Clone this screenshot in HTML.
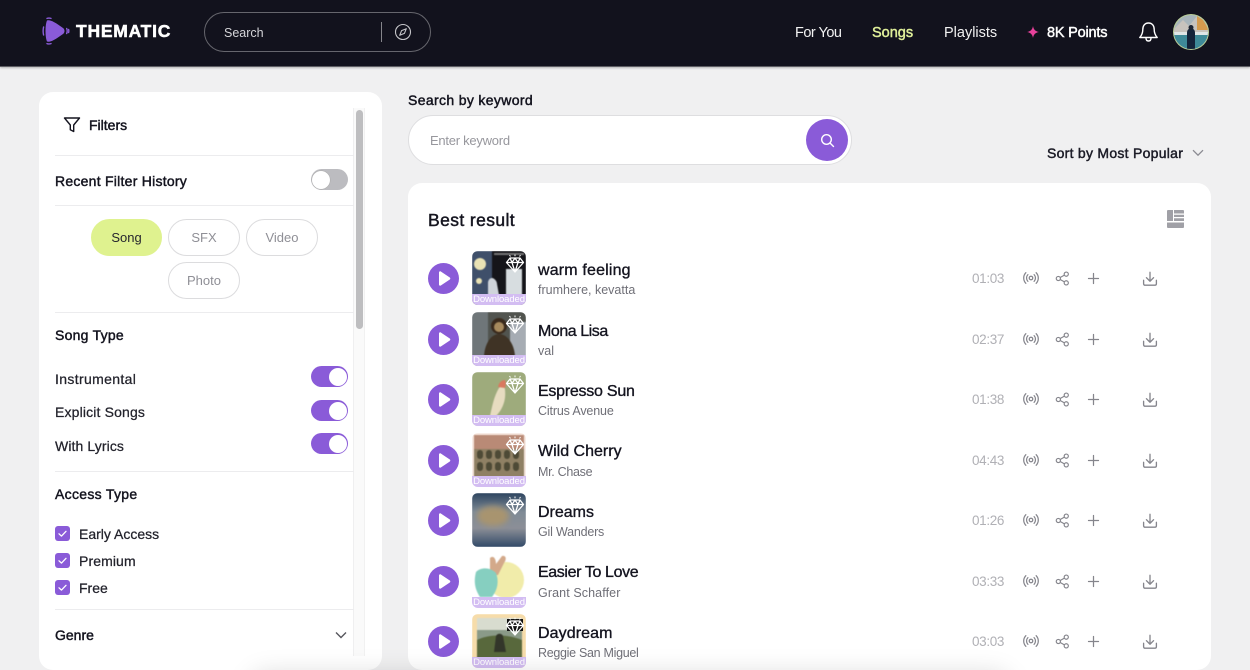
<!DOCTYPE html>
<html><head><meta charset="utf-8"><style>
*{box-sizing:border-box;margin:0;padding:0}
html,body{width:1250px;height:670px;overflow:hidden;background:#f0f0f1;font-family:"Liberation Sans",sans-serif;color:#14141f}
#w{position:relative;width:1250px;height:670px;overflow:hidden}
.a{position:absolute;white-space:nowrap}
.m{-webkit-text-stroke:.25px currentColor}
.s{-webkit-text-stroke:.45px currentColor}
.hr{position:absolute;left:55px;width:299px;height:1px;background:#ececee}
.t{position:absolute;left:311px;width:37px;height:21px;border-radius:11px;background:#8a5bd8}
.t i{position:absolute;right:1px;top:1.5px;width:18px;height:18px;border-radius:50%;background:#fff}
.p{position:absolute;height:37px;border:1px solid #dcdcde;border-radius:19px;color:#8f8f96;font-size:13px;text-align:center;line-height:35px;background:#fff}
.c{position:absolute;left:55px;width:15px;height:15px;border-radius:3px;background:#8a5bd8}
.row{position:absolute;left:0;width:1250px;height:54px}
.pl{position:absolute;left:428px;top:12px;width:31px;height:31px;border-radius:50%;background:#8a5bd8}
.th{position:absolute;left:472px;top:0;width:54px;height:54px;border-radius:6px;overflow:hidden}
.th svg{display:block;filter:blur(.4px)}
.dl{position:absolute;left:0;bottom:0;width:54px;height:11.5px;background:#d3bdf2;color:#fff;font-size:9.5px;line-height:12px;text-align:center;letter-spacing:-.1px}
.ti{position:absolute;left:538px;top:10px;font-size:16px;color:#14141f;white-space:nowrap;-webkit-text-stroke:.35px currentColor}
.ar{position:absolute;left:538px;top:32px;font-size:12.5px;color:#6f6f77;white-space:nowrap}
.d{position:absolute;left:972px;top:20px;font-size:13.5px;color:#b0b0b5;white-space:nowrap;letter-spacing:-.35px}
.i1,.i2,.i3,.i4{position:absolute}
.i1{left:1023px;top:19px}
.i2{left:1055px;top:20px}
.i3{left:1086px;top:20px}
.i4{left:1142px;top:20px}
</style></head><body><div id="w">
<svg width="0" height="0" style="position:absolute"><defs>
<symbol id="pl" viewBox="0 0 31 31"><path d="M11 9.500c0-1 1-1.500 1.800-1l9 6c.7.500.7 1.500 0 2l-9 6c-.8.500-1.800 0-1.800-1z" fill="#fff"/></symbol>
<symbol id="gem" viewBox="0 0 20 20"><path d="M5 4h10l3.500 4.500L10 18 1.500 8.500zM1.500 8.500h17M7 8.500 10 18l3-9.500M5 4l2 4.500L10 4l3 4.500L15 4" fill="none" stroke="#fff" stroke-width="1.300" stroke-linejoin="round"/><path d="M10 .5v1.800M4.500 1l1 1.500M15.500 1l-1 1.500" stroke="#fff" stroke-width="1"/></symbol>
<symbol id="ra" viewBox="0 0 18 18"><circle cx="9" cy="9" r="2" fill="none" stroke="#85858c" stroke-width="1.400"/><path d="M5.500 5.200a5.500 5.500 0 0 0 0 7.600M12.500 5.200a5.500 5.500 0 0 1 0 7.600M3.200 3a8.700 8.700 0 0 0 0 12M14.800 3a8.700 8.700 0 0 1 0 12" fill="none" stroke="#85858c" stroke-width="1.400" stroke-linecap="round"/></symbol>
<symbol id="sh" viewBox="0 0 18 18"><circle cx="13.500" cy="3.800" r="2.500" fill="none" stroke="#85858c" stroke-width="1.400"/><circle cx="13.500" cy="14.200" r="2.500" fill="none" stroke="#85858c" stroke-width="1.400"/><circle cx="4" cy="9" r="2.500" fill="none" stroke="#85858c" stroke-width="1.400"/><path d="M6.200 7.800 11.300 5M6.200 10.200l5.100 2.800" stroke="#85858c" stroke-width="1.400"/></symbol>
<symbol id="pu" viewBox="0 0 18 18"><path d="M9 3v12M3 9h12" stroke="#85858c" stroke-width="1.500" stroke-linecap="round"/></symbol>
<symbol id="do" viewBox="0 0 18 18"><path d="M9 1.500v9.500M5 7.500l4 4 4-4M1.800 10.500v3.700c0 1 .7 1.800 1.700 1.800h11c1 0 1.700-.8 1.700-1.800v-3.700" fill="none" stroke="#85858c" stroke-width="1.500" stroke-linecap="round" stroke-linejoin="round"/></symbol>
<symbol id="ck" viewBox="0 0 15 15"><path d="M4 7.800l2.500 2.300L11 5.300" fill="none" stroke="#fff" stroke-width="1.300" stroke-linecap="round" stroke-linejoin="round"/></symbol>
</defs></svg>

<!-- header -->
<div class="a" style="left:0;top:0;width:1250px;height:67px;background:#12121d;border-bottom:1px solid #5d5d63;box-shadow:0 1px 2px rgba(0,0,0,.25)"></div>
<svg class="a" style="left:42px;top:17px" width="28" height="28" viewBox="0 0 28 28"><path d="M5 3.500C8 2.500 12 4.500 21 11c2 1.700 2 4.300 0 6C12 23.500 8 25.500 5 24.500 3 20 3 8 5 3.500z" fill="#8a5bd8"/><path d="M1.600 10c-.6 2.500-.6 5.500 0 8M5 1.400c1.300-.5 2.600-.5 4 0M5 26.600c1.300.5 2.600.5 4 0M24.700 11.500c.6 1.500.6 3.500 0 5M26.600 12.500c.3 1 .3 2 0 3" fill="none" stroke="#8a5bd8" stroke-width="1.400" stroke-linecap="round"/></svg>
<div class="a" style="left:76px;top:21px;font-size:17.500px;font-weight:bold;color:#fff;letter-spacing:.75px;-webkit-text-stroke:.5px #fff">THEMATIC</div>
<div class="a" style="left:204px;top:12px;width:227px;height:40px;border:1px solid #66666d;border-radius:20px"></div>
<div class="a" style="left:224px;top:26px;font-size:12.500px;color:#d5d5d9">Search</div>
<div class="a" style="left:381px;top:22px;width:1px;height:20px;background:#85858b"></div>
<svg class="a" style="left:394px;top:23px" width="18" height="18" viewBox="0 0 18 18"><circle cx="9" cy="9" r="7.500" fill="none" stroke="#c4c4c8" stroke-width="1.100"/><path d="M12.300 5.700 10.400 10.400 5.700 12.300 7.600 7.600z" fill="none" stroke="#c4c4c8" stroke-width="1.100" stroke-linejoin="round"/></svg>
<div class="a" style="left:795px;top:25px;font-size:14.500px;color:#f2f2f2;letter-spacing:-.5px">For You</div>
<div class="a s" style="left:872px;top:25px;font-size:14.500px;color:#e0f09a">Songs</div>
<div class="a" style="left:944px;top:25px;font-size:14.500px;color:#f2f2f2">Playlists</div>
<svg class="a" style="left:1026px;top:25px" width="14" height="14" viewBox="0 0 14 14"><path d="M7 1c.6 3.600 2.300 5.300 6 6-3.700.7-5.400 2.400-6 6-.6-3.600-2.300-5.300-6-6 3.700-.7 5.400-2.400 6-6z" fill="#e8429c"/></svg>
<div class="a s" style="left:1047px;top:25px;font-size:14.500px;color:#fff;letter-spacing:-.2px">8K Points</div>
<svg class="a" style="left:1138px;top:21px" width="21" height="22" viewBox="0 0 21 22"><path d="M10.500 2C6.800 2 4.800 4.800 4.800 8.500c0 4-1.300 6-3 8h17.400c-1.700-2-3-4-3-8C16.200 4.800 14.200 2 10.500 2zM8 17c0 2 1 3 2.500 3s2.500-1 2.500-3" fill="none" stroke="#fff" stroke-width="1.400" stroke-linejoin="round"/></svg>
<svg class="a" style="left:1173px;top:14px" width="36" height="36" viewBox="0 0 36 36"><defs><clipPath id="av"><circle cx="18" cy="18" r="17"/></clipPath></defs><circle cx="18" cy="18" r="18" fill="#b9cf97"/><g clip-path="url(#av)"><rect width="36" height="36" fill="#a8b5bb"/><path d="M0 16 10 6l6 6 8-10 12 12v4H0z" fill="#c7c3bd"/><path d="M24 2l6 4 6 10H24z" fill="#d59b4e"/><rect y="18" width="36" height="18" fill="#3e8a98"/><path d="M0 18h36v3H0z" fill="#dfe6e6"/><path d="M14 36V19c0-3 1.500-4.500 4-4.500s4 1.500 4 4.500v17z" fill="#14243a"/><circle cx="18" cy="13.500" r="2.500" fill="#1c2433"/></g></svg>

<!-- sidebar -->
<div class="a" style="left:39px;top:92px;width:343px;height:578px;background:#fff;border-radius:14px"></div>
<div class="a" style="left:353px;top:108px;width:12px;height:548px;background:#fafafa;border-left:1px solid #efeff0;border-right:1px solid #f1f1f1"></div>
<div class="a" style="left:356px;top:110px;width:7px;height:219px;background:#bebec0;border-radius:4px"></div>
<svg class="a" style="left:63px;top:116px" width="18" height="18" viewBox="0 0 18 18"><path d="M1.500 2h15l-5.800 7v6.500l-3.400-1.800V9z" fill="none" stroke="#14141f" stroke-width="1.400" stroke-linejoin="round"/></svg>
<div class="a s" style="left:89px;top:117px;font-size:14px">Filters</div>
<div class="hr" style="top:155px"></div>
<div class="a s" style="left:55px;top:173px;font-size:14px;letter-spacing:.25px">Recent Filter History</div>
<div class="t" style="top:169px;background:#bcbcc0"><i style="right:auto;left:1px;box-shadow:0 0 0 .5px #aaa"></i></div>
<div class="hr" style="top:205px"></div>
<div class="p" style="left:91px;top:219px;width:71px;background:#dff28f;border-color:#dff28f;color:#26262e">Song</div>
<div class="p" style="left:168px;top:219px;width:72px">SFX</div>
<div class="p" style="left:246px;top:219px;width:72px">Video</div>
<div class="p" style="left:168px;top:262px;width:72px">Photo</div>
<div class="hr" style="top:312px"></div>
<div class="a s" style="left:55px;top:327px;font-size:14px;letter-spacing:.25px">Song Type</div>
<div class="a m" style="left:55px;top:371px;font-size:14px;color:#22222b;letter-spacing:.35px">Instrumental</div>
<div class="t" style="top:366px"><i></i></div>
<div class="a m" style="left:55px;top:404px;font-size:14px;color:#22222b;letter-spacing:.15px">Explicit Songs</div>
<div class="t" style="top:400px"><i></i></div>
<div class="a m" style="left:55px;top:438px;font-size:14px;color:#22222b;letter-spacing:.1px">With Lyrics</div>
<div class="t" style="top:433px"><i></i></div>
<div class="hr" style="top:471px"></div>
<div class="a s" style="left:55px;top:486px;font-size:14px;letter-spacing:.3px">Access Type</div>
<div class="c" style="top:526px"><svg width="15" height="15"><use href="#ck"/></svg></div>
<div class="a m" style="left:79px;top:526px;font-size:14px;color:#22222b">Early Access</div>
<div class="c" style="top:553px"><svg width="15" height="15"><use href="#ck"/></svg></div>
<div class="a m" style="left:79px;top:553px;font-size:14px;color:#22222b;letter-spacing:.1px">Premium</div>
<div class="c" style="top:580px"><svg width="15" height="15"><use href="#ck"/></svg></div>
<div class="a m" style="left:79px;top:580px;font-size:14px;color:#22222b">Free</div>
<div class="hr" style="top:609px"></div>
<div class="a s" style="left:55px;top:627px;font-size:14px">Genre</div>
<svg class="a" style="left:335px;top:631px" width="12" height="8" viewBox="0 0 12 8"><path d="M1 1.500l5 5 5-5" fill="none" stroke="#55555c" stroke-width="1.400"/></svg>

<!-- search -->
<div class="a s" style="left:408px;top:92px;font-size:14px;letter-spacing:.35px">Search by keyword</div>
<div class="a" style="left:408px;top:115px;width:444px;height:50px;background:#fff;border:1px solid #dedee0;border-radius:25px"></div>
<div class="a" style="left:430px;top:133px;font-size:13px;color:#97979d;letter-spacing:-.25px">Enter keyword</div>
<div class="a" style="left:806px;top:119px;width:42px;height:42px;border-radius:50%;background:#8a5bd8"></div>
<svg class="a" style="left:820px;top:133px" width="15" height="15" viewBox="0 0 15 15"><circle cx="6.500" cy="6.500" r="4.800" fill="none" stroke="#fff" stroke-width="1.400"/><path d="M10 10l3.500 3.500" stroke="#fff" stroke-width="1.400" stroke-linecap="round"/></svg>
<div class="a s" style="left:1047px;top:145px;font-size:14px;color:#1b1b26;letter-spacing:.27px">Sort by Most Popular</div>
<svg class="a" style="left:1192px;top:149px" width="12" height="8" viewBox="0 0 12 8"><path d="M1 1.200l5 5 5-5" fill="none" stroke="#8b8b92" stroke-width="1.300"/></svg>

<!-- results panel -->
<div class="a" style="left:408px;top:183px;width:803px;height:487px;background:#fff;border-radius:14px"></div>
<div class="a s" style="left:428px;top:210px;font-size:17.500px;color:#14141f;letter-spacing:.4px">Best result</div>
<svg class="a" style="left:1167px;top:210px" width="17" height="18" viewBox="0 0 17 18"><path d="M0 1a1 1 0 0 1 1-1h5v11H0zM7 0h9a1 1 0 0 1 1 1v2.500H7zM7 4.700h10V7H7zM7 8.200h10V11H7zM0 12.500h17V17a1 1 0 0 1-1 1H1a1 1 0 0 1-1-1z" fill="#a0a0a6"/></svg>

<!-- row 1 -->
<div class="row" style="top:251px">
<div class="pl"><svg width="31" height="31"><use href="#pl"/></svg></div>
<div class="th"><svg width="54" height="54"><rect width="54" height="54" fill="#15151a"/><rect x="0" y="0" width="20" height="44" fill="#3f4f6a"/><circle cx="8" cy="13" r="6" fill="#e9e2b4"/><circle cx="7" cy="30" r="3" fill="#e9e2b4"/><path d="M16 44V32c0-3 2-5 4-5s5 3 5 6l2 11z" fill="#cfd4da"/><rect x="34" y="18" width="16" height="26" fill="#d7dde0"/><rect x="22" y="2" width="30" height="2" fill="#777"/></svg><div class="dl">Downloaded</div></div>
<svg width="20" height="20" style="position:absolute;left:505px;top:3px"><use href="#gem"/></svg>
<div class="ti" style="letter-spacing:.17px;top:11px">warm feeling</div><div class="ar">frumhere, kevatta</div><div class="d">01:03</div>
<svg class="i1" width="16" height="16"><use href="#ra"/></svg><svg class="i2" width="15" height="15"><use href="#sh"/></svg><svg class="i3" width="15" height="15"><use href="#pu"/></svg><svg class="i4" width="16" height="16"><use href="#do"/></svg>
</div>
<!-- row 2 -->
<div class="row" style="top:312px">
<div class="pl"><svg width="31" height="31"><use href="#pl"/></svg></div>
<div class="th"><svg width="54" height="54"><rect width="54" height="54" fill="#51544f"/><path d="M0 0h16v44H0z" fill="#6f7679"/><path d="M38 10h16v34H38z" fill="#a6acb3"/><circle cx="27" cy="14" r="8" fill="#3a2a1c"/><path d="M12 44c1-14 8-22 15-22s15 8 16 22z" fill="#3f3325"/><circle cx="27" cy="15" r="5" fill="#a78a5d"/></svg><div class="dl">Downloaded</div></div>
<svg width="20" height="20" style="position:absolute;left:505px;top:3px"><use href="#gem"/></svg>
<div class="ti" style="letter-spacing:-.45px;top:11px">Mona Lisa</div><div class="ar">val</div><div class="d">02:37</div>
<svg class="i1" width="16" height="16"><use href="#ra"/></svg><svg class="i2" width="15" height="15"><use href="#sh"/></svg><svg class="i3" width="15" height="15"><use href="#pu"/></svg><svg class="i4" width="16" height="16"><use href="#do"/></svg>
</div>
<!-- row 3 -->
<div class="row" style="top:372px">
<div class="pl"><svg width="31" height="31"><use href="#pl"/></svg></div>
<div class="th"><svg width="54" height="54"><rect width="54" height="54" fill="#9eab7c"/><path d="M18 44c2-9 4-20 9-28 3-3 6-2 6 2 1 8-1 18-9 26z" fill="#e7dcc0"/><path d="M26 15c1-5 4-7 7-7 1 2 1 5 0 8z" fill="#d9795f"/></svg><div class="dl">Downloaded</div></div>
<svg width="20" height="20" style="position:absolute;left:505px;top:3px"><use href="#gem"/></svg>
<div class="ti" style="letter-spacing:-.25px;top:11px">Espresso Sun</div><div class="ar" style="letter-spacing:-.15px">Citrus Avenue</div><div class="d">01:38</div>
<svg class="i1" width="16" height="16"><use href="#ra"/></svg><svg class="i2" width="15" height="15"><use href="#sh"/></svg><svg class="i3" width="15" height="15"><use href="#pu"/></svg><svg class="i4" width="16" height="16"><use href="#do"/></svg>
</div>
<!-- row 4 -->
<div class="row" style="top:433px">
<div class="pl"><svg width="31" height="31"><use href="#pl"/></svg></div>
<div class="th"><svg width="54" height="54"><rect width="54" height="54" fill="#f7e7df"/><rect x="2" y="2" width="50" height="14" fill="#b98a76"/><rect x="2" y="16" width="50" height="30" fill="#8f8064"/><g fill="#4e4a36"><rect x="5" y="17" width="6" height="9" rx="3"/><rect x="14" y="17" width="6" height="9" rx="3"/><rect x="23" y="17" width="6" height="9" rx="3"/><rect x="32" y="17" width="6" height="9" rx="3"/><rect x="41" y="17" width="6" height="9" rx="3"/><rect x="5" y="29" width="6" height="9" rx="3"/><rect x="14" y="29" width="6" height="9" rx="3"/><rect x="23" y="29" width="6" height="9" rx="3"/><rect x="32" y="29" width="6" height="9" rx="3"/><rect x="41" y="29" width="6" height="9" rx="3"/></g></svg><div class="dl">Downloaded</div></div>
<svg width="20" height="20" style="position:absolute;left:505px;top:3px"><use href="#gem"/></svg>
<div class="ti">Wild Cherry</div><div class="ar" style="letter-spacing:-.3px">Mr. Chase</div><div class="d">04:43</div>
<svg class="i1" width="16" height="16"><use href="#ra"/></svg><svg class="i2" width="15" height="15"><use href="#sh"/></svg><svg class="i3" width="15" height="15"><use href="#pu"/></svg><svg class="i4" width="16" height="16"><use href="#do"/></svg>
</div>
<!-- row 5 -->
<div class="row" style="top:493px">
<div class="pl"><svg width="31" height="31"><use href="#pl"/></svg></div>
<div class="th"><svg width="54" height="54"><defs><linearGradient id="dr" x1="0" y1="0" x2="0" y2="1"><stop offset="0" stop-color="#2e4560"/><stop offset=".35" stop-color="#7f8b96"/><stop offset=".65" stop-color="#8c8f97"/><stop offset="1" stop-color="#324a68"/></linearGradient></defs><rect width="54" height="54" fill="url(#dr)"/><ellipse cx="21" cy="23" rx="16" ry="10" fill="#a8946f" style="filter:blur(3px)"/></svg></div>
<svg width="20" height="20" style="position:absolute;left:505px;top:3px"><use href="#gem"/></svg>
<div class="ti" style="top:11px">Dreams</div><div class="ar" style="letter-spacing:-.2px">Gil Wanders</div><div class="d">01:26</div>
<svg class="i1" width="16" height="16"><use href="#ra"/></svg><svg class="i2" width="15" height="15"><use href="#sh"/></svg><svg class="i3" width="15" height="15"><use href="#pu"/></svg><svg class="i4" width="16" height="16"><use href="#do"/></svg>
</div>
<!-- row 6 -->
<div class="row" style="top:554px">
<div class="pl"><svg width="31" height="31"><use href="#pl"/></svg></div>
<div class="th"><svg width="54" height="54"><rect width="54" height="54" fill="#fff"/><circle cx="34" cy="26" r="18" fill="#f1ecaa"/><path d="M18 4c3-3 6 0 6 6l6-8c4-1 5 3 2 7l-6 12H18z" fill="#d3a98a"/><path d="M4 18c5-5 14-5 20 1 3 8 2 16-4 24H8C2 34 2 26 4 18z" fill="#86cfc0"/></svg><div class="dl">Downloaded</div></div>
<div class="ti" style="letter-spacing:-.38px">Easier To Love</div><div class="ar" style="letter-spacing:.1px">Grant Schaffer</div><div class="d">03:33</div>
<svg class="i1" width="16" height="16"><use href="#ra"/></svg><svg class="i2" width="15" height="15"><use href="#sh"/></svg><svg class="i3" width="15" height="15"><use href="#pu"/></svg><svg class="i4" width="16" height="16"><use href="#do"/></svg>
</div>
<!-- row 7 -->
<div class="row" style="top:614px">
<div class="pl"><svg width="31" height="31"><use href="#pl"/></svg></div>
<div class="th"><svg width="54" height="54"><rect width="54" height="54" fill="#f6dcaa"/><rect x="5" y="4" width="45" height="40" fill="#8a9a88"/><rect x="5" y="4" width="45" height="12" fill="#d8dccf"/><path d="M5 26c12-6 30-6 45 0v18H5z" fill="#58683c"/><path d="M22 38l2-16c1-3 6-3 7 0l3 16z" fill="#33362a"/></svg><div class="dl">Downloaded</div></div>
<svg width="20" height="20" style="position:absolute;left:505px;top:3px"><rect x="2" y="2" width="16" height="12" fill="#111"/><use href="#gem"/></svg>
<div class="ti" style="letter-spacing:.1px;top:11px">Daydream</div><div class="ar" style="letter-spacing:-.3px">Reggie San Miguel</div><div class="d">03:03</div>
<svg class="i1" width="16" height="16"><use href="#ra"/></svg><svg class="i2" width="15" height="15"><use href="#sh"/></svg><svg class="i3" width="15" height="15"><use href="#pu"/></svg><svg class="i4" width="16" height="16"><use href="#do"/></svg>
</div>
<!-- bottom shadow -->
<div class="a" style="left:255px;top:678px;width:750px;height:20px;border-radius:14px;box-shadow:0 0 26px 4px rgba(0,0,0,.15)"></div>
</div></body></html>
